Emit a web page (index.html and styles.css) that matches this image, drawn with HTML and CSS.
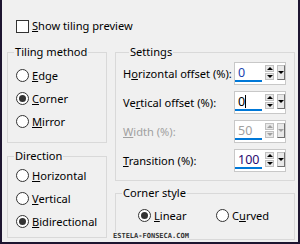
FILE: index.html
```html
<!DOCTYPE html>
<html lang="en">
<head>
    <meta charset="UTF-8">
    <title>Tiling</title>
    <link rel="stylesheet" href="styles.css">
</head>
<body>
    <div class="dialog">
        <label class="check-row">
            <span class="checkbox"></span>
            <span><u>S</u>how tiling preview</span>
        </label>

        <div class="columns">
            <div class="col">
                <fieldset class="group tiling">
                    <legend>Tiling method</legend>
                    <div class="radio-list">
                        <label class="radio"><span class="dot"></span><span><u>E</u>dge</span></label>
                        <label class="radio"><span class="dot on"></span><span><u>C</u>orner</span></label>
                        <label class="radio"><span class="dot"></span><span><u>M</u>irror</span></label>
                    </div>
                </fieldset>
                <fieldset class="group direction">
                    <legend>Direction</legend>
                    <div class="radio-list">
                        <label class="radio"><span class="dot"></span><span><u>H</u>orizontal</span></label>
                        <label class="radio"><span class="dot"></span><span><u>V</u>ertical</span></label>
                        <label class="radio"><span class="dot on"></span><span><u>B</u>idirectional</span></label>
                    </div>
                </fieldset>
            </div>

            <div class="col">
                <fieldset class="group settings">
                    <legend>Settings</legend>
                    <div class="field">
                        <span class="label">H<u>o</u>rizontal offset (%):</span>
                        <div class="spinner">
                            <span class="value blue">0</span>
                            <span class="spin"><i class="up"></i><i class="down"></i></span>
                            <span class="drop"><i class="down"></i></span>
                        </div>
                    </div>
                    <div class="field">
                        <span class="label">Ve<u>r</u>tical offset (%):</span>
                        <div class="spinner">
                            <span class="value">0<b class="caret"></b></span>
                            <span class="spin"><i class="up"></i><i class="down"></i></span>
                            <span class="drop"><i class="down"></i></span>
                        </div>
                    </div>
                    <div class="field disabled">
                        <span class="label"><u>W</u>idth (%):</span>
                        <div class="spinner">
                            <span class="value">50</span>
                            <span class="spin"><i class="up"></i><i class="down"></i></span>
                            <span class="drop"><i class="down"></i></span>
                        </div>
                    </div>
                    <div class="field">
                        <span class="label"><u>T</u>ransition (%):</span>
                        <div class="spinner">
                            <span class="value navy">100</span>
                            <span class="spin"><i class="up"></i><i class="down"></i></span>
                            <span class="drop"><i class="down"></i></span>
                        </div>
                    </div>
                </fieldset>
                <fieldset class="group corner">
                    <legend>Corner style</legend>
                    <div class="radio-row">
                        <label class="radio"><span class="dot on"></span><span><u>L</u>inear</span></label>
                        <label class="radio"><span class="dot"></span><span>C<u>u</u>rved</span></label>
                    </div>
                </fieldset>
            </div>
        </div>

        <div class="watermark">ESTELA-FONSECA.COM</div>
    </div>
</body>
</html>
```

FILE: styles.css
```css
body {
    margin: 0;
    font-family: "Noto Sans", "Open Sans", sans-serif;
    font-size: 11.1px;
    color: #000;
}
.dialog {
    position: relative;
    width: 300px;
    height: 244px;
    box-sizing: border-box;
    background-color: #f0f0f0;
    border-left: 2px solid #1d1530;
    border-right: 2px solid #1d1530;
    border-bottom: 2px solid #1d1530;
    padding: 0 0 0 5px;
}
u {
    text-decoration: underline;
    text-underline-offset: 1px;
}
.check-row {
    display: flex;
    align-items: center;
    gap: 3px;
    height: 14px;
    padding: 19px 0 0 9px;
    line-height: 14px;
}
.checkbox {
    width: 11px;
    height: 11px;
    border: 1px solid #333;
    background-color: #fff;
}
.columns {
    display: grid;
    grid-template-columns: 100px 180px;
    column-gap: 8px;
    margin-top: 12px;
}
.col {
    display: flex;
    flex-direction: column;
}
.group {
    margin: 0;
    padding: 0;
    min-width: 0;
    box-sizing: border-box;
    border: 1px solid #d9d9d9;
}
.group legend {
    margin-left: 6px;
    padding: 0 1px;
    line-height: 14px;
}
.tiling {
    height: 98px;
}
.tiling .radio-list {
    padding-top: 5px;
}
.direction {
    height: 89px;
    margin-top: 6px;
}
.direction .radio-list {
    padding-top: 1px;
}
.radio-list {
    display: flex;
    flex-direction: column;
    padding-left: 8px;
}
.radio {
    display: flex;
    align-items: center;
    height: 23px;
    gap: 3px;
    white-space: nowrap;
}
.dot {
    position: relative;
    width: 11px;
    height: 11px;
    border: 1px solid #333;
    border-radius: 50%;
    background-color: #fff;
}
.dot.on::after {
    content: "";
    position: absolute;
    left: 2px;
    top: 2px;
    width: 7px;
    height: 7px;
    border-radius: 50%;
    background-color: #333;
}
.settings {
    height: 136px;
    padding: 2px 0 0 7px;
}
.field {
    display: flex;
    align-items: center;
    height: 24px;
    margin-bottom: 5px;
}
.label {
    width: 111px;
    white-space: nowrap;
}
.disabled {
    color: #a0a0a0;
}
.spinner {
    display: flex;
    align-items: flex-start;
    width: 52px;
    height: 23px;
    box-sizing: border-box;
    border: 1px solid #c8c8c8;
    background-color: #fff;
}
.value {
    width: 28px;
    height: 19px;
    padding-left: 3px;
    box-sizing: border-box;
    line-height: 20px;
    border-bottom: 2px solid #0078d7;
    font-size: 12.5px;
}
.value.blue {
    color: #1a3fb0;
}
.value.navy {
    color: #2a0a70;
}
.disabled .value {
    color: #a0a0a0;
}
.caret {
    display: inline-block;
    width: 1px;
    height: 13px;
    background-color: #000;
    vertical-align: -2px;
}
.spin {
    display: flex;
    flex-direction: column;
    gap: 1px;
    margin: 2px 0 0 3px;
}
.spin i, .drop i {
    display: flex;
    align-items: center;
    justify-content: center;
    width: 9px;
    height: 7px;
    box-sizing: border-box;
    border: 1px solid #c0c0c0;
    background-color: #e8e8e8;
}
.spin i::after, .drop i::after {
    content: "";
    border-left: 3px solid transparent;
    border-right: 3px solid transparent;
}
.up::after {
    border-bottom: 3px solid #000;
}
.down::after {
    border-top: 3px solid #000;
}
.drop {
    margin: 2px 0 0 3px;
}
.drop i {
    height: 15px;
    width: 8px;
    border-right-color: #707070;
    border-bottom-color: #707070;
}
.disabled .spin i::after, .disabled .drop i::after {
    border-top-color: #a0a0a0;
    border-bottom-color: #a0a0a0;
}
.corner {
    height: 54px;
    margin-top: 5px;
}
.radio-row {
    display: flex;
    padding: 4px 0 0 22px;
}
.radio-row .radio {
    width: 82px;
}
.watermark {
    position: absolute;
    left: 111px;
    top: 232px;
    font-family: "DejaVu Sans Mono", monospace;
    font-weight: bold;
    font-size: 7px;
    color: #333;
    background-color: #f0f0f0;
}
```
